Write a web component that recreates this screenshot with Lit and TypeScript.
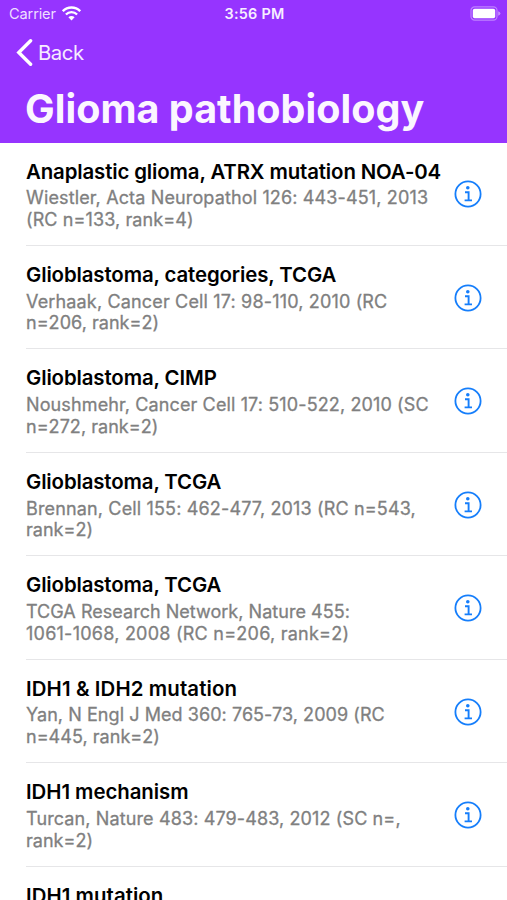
import { LitElement, html, css } from "lit";
import { customElement, property } from "lit/decorators.js";
import { styleMap } from "lit/directives/style-map.js";

interface Run {
  text: string;
  tracking: number;
}

interface Study {
  title: Run;
  lines: Run[];
}

const run = (text: string, tracking: number): Run => ({ text, tracking });

const STUDIES: Study[] = [
  {
    title: run("Anaplastic glioma, ATRX mutation NOA-04", -0.12),
    lines: [run("Wiestler, Acta Neuropathol 126: 443-451, 2013", 0.14), run("(RC n=133, rank=4)", 0.1)],
  },
  {
    title: run("Glioblastoma, categories, TCGA", -0.11),
    lines: [run("Verhaak, Cancer Cell 17: 98-110, 2010 (RC", 0.16), run("n=206, rank=2)", 0.04)],
  },
  {
    title: run("Glioblastoma, CIMP", -0.11),
    lines: [run("Noushmehr, Cancer Cell 17: 510-522, 2010 (SC", 0.12), run("n=272, rank=2)", 0.04)],
  },
  {
    title: run("Glioblastoma, TCGA", -0.12),
    lines: [run("Brennan, Cell 155: 462-477, 2013 (RC n=543,", 0.15), run("rank=2)", 0.03)],
  },
  {
    title: run("Glioblastoma, TCGA", -0.12),
    lines: [run("TCGA Research Network, Nature 455:", 0.03), run("1061-1068, 2008 (RC n=206, rank=2)", 0.24)],
  },
  {
    title: run("IDH1 & IDH2 mutation", 0.12),
    lines: [run("Yan, N Engl J Med 360: 765-73, 2009 (RC", 0.06), run("n=445, rank=2)", 0.04)],
  },
  {
    title: run("IDH1 mechanism", -0.05),
    lines: [run("Turcan, Nature 483: 479-483, 2012 (SC n=,", 0.12), run("rank=2)", 0.03)],
  },
  { title: run("IDH1 mutation", 0.05), lines: [] },
];

@customElement("study-row")
export class StudyRow extends LitElement {
  @property({ attribute: false }) study!: Study;

  static styles = css`
    :host {
      display: flex;
      align-items: center;
      box-sizing: border-box;
      height: 103.45px;
      flex: none;
      margin-left: 26px;
      padding-right: 25px;
      border-bottom: 1px solid #e6e6e8;
    }
    .text {
      flex: 1;
      min-width: 0;
      align-self: flex-start;
      padding-top: 16px;
      white-space: nowrap;
    }
    .title {
      font-size: 20.4px;
      font-weight: 600;
      line-height: 26px;
      margin-bottom: 2.7px;
      color: #000;
    }
    .line {
      font-size: 18px;
      font-weight: 400;
      line-height: 21.6px;
      color: #808080;
      -webkit-text-stroke: 0.3px #808080;
    }
    .info {
      display: block;
      flex: none;
      width: 28px;
      height: 28px;
      margin-top: 1px;
    }
  `;

  private renderRun(r: Run, kind: string) {
    return html`<div class=${kind} style=${styleMap({ letterSpacing: `${r.tracking}px` })}>${r.text}</div>`;
  }

  render() {
    return html`
      <div class="text">
        ${this.renderRun(this.study.title, "title")}
        ${this.study.lines.map((l) => this.renderRun(l, "line"))}
      </div>
      <svg class="info" viewBox="0 0 28 28" fill="none" stroke="#157efb">
        <circle cx="14" cy="14" r="12.6" stroke-width="1.8" />
        <circle cx="13.8" cy="7.8" r="1.8" fill="#157efb" stroke="none" />
        <path d="M11 12.2H14.6V20.2M10.6 20.4H18" stroke-width="1.9" />
      </svg>
    `;
  }
}

@customElement("app-root")
export class AppRoot extends LitElement {
  static styles = css`
    :host {
      display: flex;
      flex-direction: column;
      width: 507px;
      height: 900px;
      overflow: hidden;
      background: #fff;
      font-family: Inter, "Liberation Sans", sans-serif;
    }
    .header {
      flex: none;
      display: flex;
      flex-direction: column;
      height: 142.6px;
      background: #9634ff;
      color: #fff;
    }
    .status {
      display: grid;
      grid-template-columns: 1fr auto 1fr;
      align-items: center;
      height: 27px;
      padding: 0 7px 0 9px;
      font-size: 14.6px;
    }
    .carrier {
      display: flex;
      align-items: center;
      gap: 6px;
      letter-spacing: -0.15px;
      color: #eedfff;
    }
    .time {
      font-weight: 600;
      font-size: 14.4px;
      letter-spacing: 0.25px;
      color: #f7eeff;
    }
    .battery {
      justify-self: end;
      display: block;
      margin-right: -1px;
    }
    .wifi {
      display: block;
    }
    .back {
      display: flex;
      align-items: center;
      gap: 5px;
      height: 50px;
      padding-left: 16px;
      font-size: 20.3px;
      letter-spacing: -0.45px;
      color: #f6ecff;
    }
    .heading {
      margin: 0;
      padding: 8px 0 0 25px;
      font-size: 39.5px;
      line-height: 48px;
      font-weight: 700;
      letter-spacing: 0.03px;
      white-space: nowrap;
      color: #fbf6ff;
    }
    .list {
      display: flex;
      flex-direction: column;
      flex: 1;
      min-height: 0;
      overflow: hidden;
    }
  `;

  render() {
    return html`
      <div class="header">
        <div class="status">
          <div class="carrier">
            <span>Carrier</span>
            <svg class="wifi" width="19" height="15" viewBox="0 0 19 15" fill="none" stroke="#fff">
              <path d="M0.8 5.2A12.2 12.2 0 0 1 18.2 5.2" stroke-width="2.5" />
              <path d="M3.9 8.5A7.9 7.9 0 0 1 15.1 8.5" stroke-width="2.3" />
              <path d="M9.5 14.4L6.4 11.3A4.4 4.4 0 0 1 12.6 11.3Z" fill="#fff" stroke="none" />
            </svg>
          </div>
          <div class="time">3:56 PM</div>
          <svg class="battery" width="31" height="15" viewBox="0 0 31 15">
            <rect x="1" y="0.9" width="26" height="13.2" rx="3.6" fill="none" stroke="#fff" stroke-opacity="0.38" stroke-width="1.2" />
            <rect x="2.8" y="2.7" width="22.4" height="9.6" rx="1.8" fill="#fff" />
            <path d="M28.2 5.2Q30.4 5.9 30.4 7.5T28.2 9.8Z" fill="#fff" fill-opacity="0.45" />
          </svg>
        </div>
        <div class="back">
          <svg width="17" height="27" viewBox="0 0 17 27" fill="none" stroke="#fff" stroke-width="3.4">
            <path d="M14.6 1.8L2.8 13.5L14.6 25.2" stroke-linecap="round" />
          </svg>
          <span>Back</span>
        </div>
        <h1 class="heading">Glioma pathobiology</h1>
      </div>
      <div class="list">${STUDIES.map((s) => html`<study-row .study=${s}></study-row>`)}</div>
    `;
  }
}
